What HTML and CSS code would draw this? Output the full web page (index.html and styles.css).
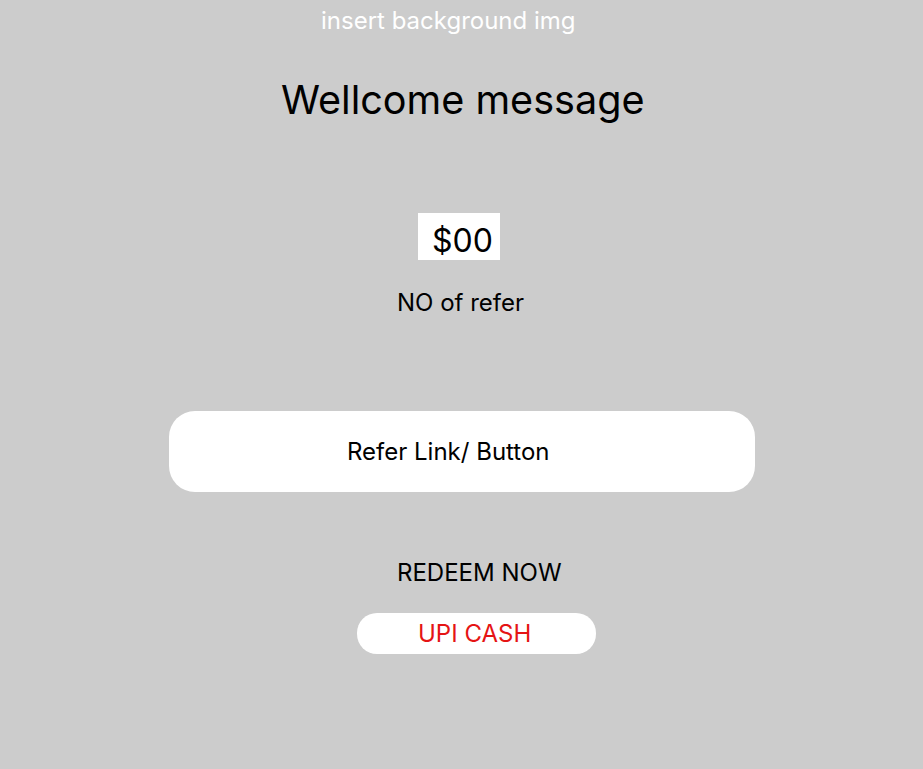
FILE: index.html
```html
<!DOCTYPE html>
<html lang="en">
<head>
<meta charset="utf-8">
<title>Refer</title>
<link rel="stylesheet" href="styles.css">
</head>
<body>
<main class="page">
  <p class="bg-note">insert background img</p>
  <h1 class="welcome">Wellcome message</h1>
  <div class="amount">$00</div>
  <p class="refer-count">NO of refer</p>
  <button class="refer-btn">Refer Link/ Button</button>
  <p class="redeem">REDEEM NOW</p>
  <button class="upi-btn">UPI CASH</button>
</main>
</body>
</html>
```

FILE: styles.css
```css
html, body {
  margin: 0;
  padding: 0;
  background: #cccccc;
}

body {
  font-family: "Inter", "Noto Sans", sans-serif;
  color: #000;
}

.page {
  width: 923px;
  height: 769px;
  display: flex;
  flex-direction: column;
  align-items: flex-start;
  padding-top: 6px;
  box-sizing: border-box;
}

.bg-note {
  margin: 0 0 0 321px;
  font-size: 24px;
  line-height: 29px;
  color: #ffffff;
}

.welcome {
  margin: 41px 0 0 281px;
  font-size: 39.6px;
  line-height: 48px;
  font-weight: 400;
}

.amount {
  margin: 89px 0 0 418px;
  width: 82px;
  height: 47px;
  box-sizing: border-box;
  padding: 8px 0 0 14px;
  background: #ffffff;
  font-size: 32px;
  line-height: 39px;
}

.refer-count {
  margin: 28px 0 0 397px;
  font-size: 24px;
  line-height: 29px;
}

.refer-btn {
  margin: 94px 0 0 169px;
  width: 586px;
  height: 81px;
  border: none;
  border-radius: 26px;
  background: #ffffff;
  display: flex;
  align-items: center;
  padding: 0 0 0 178px;
  font-family: inherit;
  font-size: 24px;
  line-height: 29px;
  color: #000;
}

.redeem {
  margin: 66px 0 0 397px;
  font-size: 24px;
  line-height: 29px;
}

.upi-btn {
  margin: 26px 0 0 357px;
  width: 239px;
  height: 41px;
  border: none;
  border-radius: 20px;
  background: #ffffff;
  display: flex;
  align-items: center;
  padding: 0 0 0 61px;
  font-family: inherit;
  font-size: 24px;
  line-height: 29px;
  color: #e51414;
}
```
